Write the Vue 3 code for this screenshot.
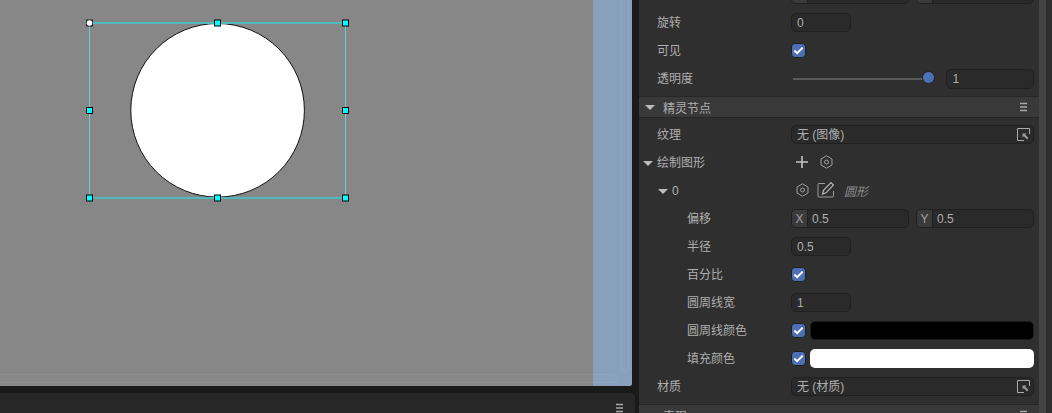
<template>
  <div class="app">
    <div class="left">
      <div class="scene">
        <svg class="gizmo" width="360" height="210" viewBox="0 0 360 210">
          <circle cx="217.600" cy="110.300" r="86.800" fill="#fff" stroke="#111" stroke-width="1" />
          <path d="M89.500 23V198M345.500 23V198" stroke="#62cfcf" fill="none" />
          <path d="M89 23H346M89 198H346" stroke="#4fb8b8" stroke-width="2" fill="none" />
          <rect v-for="h in handles" :key="h[0] + '-' + h[1]" :x="h[0] - 3" :y="h[1] - 3" width="6" height="6"
            fill="#00ffff" stroke="#000" stroke-width="1" />
          <rect x="86.500" y="20" width="6" height="6" fill="#333" stroke="#222" />
          <circle cx="89.500" cy="23" r="2.800" fill="#fff" />
        </svg>
        <div class="strip"></div>
        <div class="bar-h"></div>
        <div class="bar-v"></div>
      </div>
      <div class="bottom">
        <svg class="menu" width="9" height="10" viewBox="0 0 9 10"><path d="M1 1.500H8M1 5H8M1 8.500H8" stroke="#a8a8a8" stroke-width="1.500" /></svg>
      </div>
    </div>

    <div class="panel">
      <div class="content">
        <div class="row">
          <span class="label"></span>
          <div class="pair">
            <div class="input xy"><i></i></div>
            <div class="input xy"><i></i></div>
          </div>
        </div>
        <div class="row"><span class="label">旋转</span><div class="input small">0</div></div>
        <div class="row"><span class="label">可见</span><span class="check"><svg width="11" height="9" viewBox="0 0 11 9"><path d="M1.300 4.600L4.200 7.200L9.700 1.600" fill="none" stroke="#fff" stroke-width="2" /></svg></span></div>
        <div class="row">
          <span class="label">透明度</span>
          <div class="slider"><div class="thumb"></div></div>
          <div class="input tall">1</div>
        </div>

        <div class="head">
          <span class="arrow"></span>
          <span class="head-title">精灵节点</span>
          <svg class="menu-r" width="9" height="10" viewBox="0 0 9 10"><path d="M1 1.500H8M1 5H8M1 8.500H8" stroke="#a8a8a8" stroke-width="1.500" /></svg>
        </div>

        <div class="row"><span class="label">纹理</span>
          <div class="input wide">无 (图像)
            <svg class="pick" width="13" height="13" viewBox="0 0 13 13"><path d="M.500 12.500V.500H12.500V6M7 12.500H.500" fill="none" stroke="#aaa" /><path d="M5.500 5.500H9.500L8.300 6.800L11.500 10L10 11.500L6.800 8.300L5.500 9.500Z" fill="#999" /></svg>
          </div>
        </div>

        <div class="row">
          <span class="label tree"><span class="arrow"></span>绘制图形</span>
          <div class="tools">
            <svg width="12" height="12" viewBox="0 0 12 12"><path d="M6 0V12M0 6H12" stroke="#c4c4c4" stroke-width="1.600" /></svg>
            <svg width="13" height="14" viewBox="0 0 13 14"><path d="M6.500 .800L12 4V10L6.500 13.200L1 10V4Z" fill="none" stroke="#a0a0a0" /><circle cx="6.500" cy="7" r="2" fill="none" stroke="#a0a0a0" /></svg>
          </div>
        </div>

        <div class="row">
          <span class="label tree sub"><span class="arrow"></span><span class="num">0</span></span>
          <div class="tools">
            <svg width="13" height="14" viewBox="0 0 13 14"><path d="M6.500 .800L12 4V10L6.500 13.200L1 10V4Z" fill="none" stroke="#a0a0a0" /><circle cx="6.500" cy="7" r="2" fill="none" stroke="#a0a0a0" /></svg>
            <svg class="edit" width="17" height="16" viewBox="0 0 17 16"><path d="M8 1.500H2Q1 1.500 1 2.500V14Q1 15 2 15H15.500Q16.500 15 16.500 14V9" fill="none" stroke="#9c9c9c" /><path d="M14 .700L16.500 3L9 10.800L5.500 12L6.500 8.300Z" fill="none" stroke="#bbb" stroke-width="1.200" /></svg>
            <span class="shape">圆形</span>
          </div>
        </div>

        <div class="row"><span class="label in">偏移</span>
          <div class="pair">
            <div class="input xy"><i>X</i>0.5</div>
            <div class="input xy"><i>Y</i>0.5</div>
          </div>
        </div>
        <div class="row"><span class="label in">半径</span><div class="input small">0.5</div></div>
        <div class="row"><span class="label in">百分比</span><span class="check"><svg width="11" height="9" viewBox="0 0 11 9"><path d="M1.300 4.600L4.200 7.200L9.700 1.600" fill="none" stroke="#fff" stroke-width="2" /></svg></span></div>
        <div class="row"><span class="label in">圆周线宽</span><div class="input small">1</div></div>
        <div class="row"><span class="label in">圆周线颜色</span>
          <span class="check"><svg width="11" height="9" viewBox="0 0 11 9"><path d="M1.300 4.600L4.200 7.200L9.700 1.600" fill="none" stroke="#fff" stroke-width="2" /></svg></span>
          <div class="swatch black"></div>
        </div>
        <div class="row"><span class="label in">填充颜色</span>
          <span class="check"><svg width="11" height="9" viewBox="0 0 11 9"><path d="M1.300 4.600L4.200 7.200L9.700 1.600" fill="none" stroke="#fff" stroke-width="2" /></svg></span>
          <div class="swatch white"></div>
        </div>
        <div class="row"><span class="label">材质</span>
          <div class="input wide">无 (材质)
            <svg class="pick" width="13" height="13" viewBox="0 0 13 13"><path d="M.500 12.500V.500H12.500V6M7 12.500H.500" fill="none" stroke="#aaa" /><path d="M5.500 5.500H9.500L8.300 6.800L11.500 10L10 11.500L6.800 8.300L5.500 9.500Z" fill="#999" /></svg>
          </div>
        </div>

        <div class="head">
          <span class="arrow"></span>
          <span class="head-title">表现</span>
          <svg class="menu-r" width="9" height="10" viewBox="0 0 9 10"><path d="M1 1.500H8M1 5H8M1 8.500H8" stroke="#a8a8a8" stroke-width="1.500" /></svg>
        </div>
      </div>
    </div>

    <div class="scrollbar"></div>
  </div>
</template>

<script setup>
const handles = [
  [217.5, 23], [345.5, 23],
  [89.5, 110.5], [345.5, 110.5],
  [89.5, 198], [217.5, 198], [345.5, 198],
]
</script>

<style>
html, body { margin: 0; background: #1a1a1a; overflow: hidden; }
</style>

<style scoped>
.app {
  display: flex;
  width: 1052px;
  height: 413px;
  overflow: hidden;
  background: #1a1a1a;
  font-family: "Liberation Sans", "Noto Sans CJK SC", sans-serif;
  font-size: 12px;
  color: #aeaeae;
}

.left {
  width: 635px;
  display: flex;
  flex-direction: column;
  gap: 7px;
}
.scene {
  position: relative;
  width: 632px;
  height: 387px;
  background: #878787;
  display: flex;
  justify-content: flex-end;
  border-bottom-right-radius: 3px;
  overflow: hidden;
}
.gizmo { position: absolute; left: 0; top: 0; }
.strip { width: 39px; background: #89a0bc; }

/* faint overlay scrollbars on the viewport */
.bar-h, .bar-v {
  position: absolute;
  box-sizing: border-box;
  background: rgba(255, 255, 255, 0.015);
  border: 1px solid rgba(255, 255, 255, 0.05);
  border-radius: 5px;
}
.bar-h { left: -6px; bottom: 3px; width: 623px; height: 9px; }
.bar-v { right: 3px; top: -6px; width: 9px; height: 378px; }

.bottom {
  flex: 1;
  background: #272727;
  border-top-right-radius: 5px;
  display: flex;
  justify-content: flex-end;
  padding: 10px 11px 0 0;
}
.menu { display: block; }

.panel {
  width: 400px;
  margin-left: 4px;
  background: #2f2f2f;
  overflow: hidden;
}
.content { margin-top: -20px; }

.row {
  box-sizing: border-box;
  height: 28px;
  display: flex;
  align-items: center;
  padding: 1px 5px 0 18px;
}
.label {
  width: 134px;
  flex: none;
  padding-top: 2px;
  line-height: 29px;
  white-space: nowrap;
}
.label.in { padding-left: 30px; width: 104px; }
.label.tree { display: flex; align-items: center; margin-left: -14px; width: 148px; }
.label.tree .arrow { margin: 0 4px 0 0; }
.label.sub { margin-left: 1px; width: 133px; }

.input {
  box-sizing: border-box;
  height: 19px;
  line-height: 18px;
  background: #2a2a2a;
  border: 1px solid #202020;
  border-radius: 5px;
  padding-left: 5px;
  position: relative;
}
.input.small { width: 60px; }
.input.wide { width: 244px; }
.input.tall { width: 88px; height: 20px; line-height: 19px; padding-left: 5px; }
.pair { display: flex; gap: 7px; }
.input.xy {
  width: 118px;
  padding-left: 0;
  display: flex;
}
.input.xy i {
  font-style: normal;
  width: 15px;
  text-align: center;
  background: #3a3a3a;
  border-right: 1px solid #202020;
  border-radius: 4px 0 0 4px;
  margin-right: 4px;
  color: #a0a0a0;
}
.pick { position: absolute; right: 3px; top: 2px; }

.check {
  box-sizing: border-box;
  width: 15px;
  height: 15px;
  flex: none;
  background: #4d70b5;
  border: 1px solid #1f1f1f;
  border-radius: 4px;
  display: flex;
  align-items: center;
  justify-content: center;
}

.slider {
  position: relative;
  width: 136px;
  height: 2px;
  margin: 0 18px 0 2px;
  background: #5a5a5a;
}
.thumb {
  position: absolute;
  right: -7px;
  top: -7px;
  width: 13px;
  height: 13px;
  box-sizing: border-box;
  border: 1px solid #222;
  border-radius: 50%;
  background: #4d70b5;
}

.swatch {
  width: 225px;
  height: 19px;
  margin-left: 4px;
  box-sizing: border-box;
  border-radius: 5px;
}
.swatch.black { background: #000; border: 1px solid #1c1c1c; }
.swatch.white { background: #fff; }

.head {
  box-sizing: border-box;
  height: 22px;
  margin: 4px 0 2px;
  padding: 0 11px 0 6px;
  display: flex;
  align-items: center;
  background: #393939;
  border-top: 1px solid #262626;
  border-bottom: 1px solid #262626;
}
.head-title { margin-left: 8px; flex: 1; }
.arrow {
  width: 0;
  height: 0;
  border-left: 5px solid transparent;
  border-right: 5px solid transparent;
  border-top: 5px solid #bdbdbd;
  flex: none;
}

.tools { display: flex; align-items: center; gap: 12px; padding-left: 5px; margin-top: -1px; }
.tools .edit { margin-left: -4px; }
.shape { font-style: italic; color: #8c8c8c; margin-left: -2px; margin-top: 1px; }

.scrollbar {
  width: 13px;
  flex: none;
  background: #2f2f2f;
  border-left: 7px solid #444;
  box-sizing: border-box;
}
</style>
